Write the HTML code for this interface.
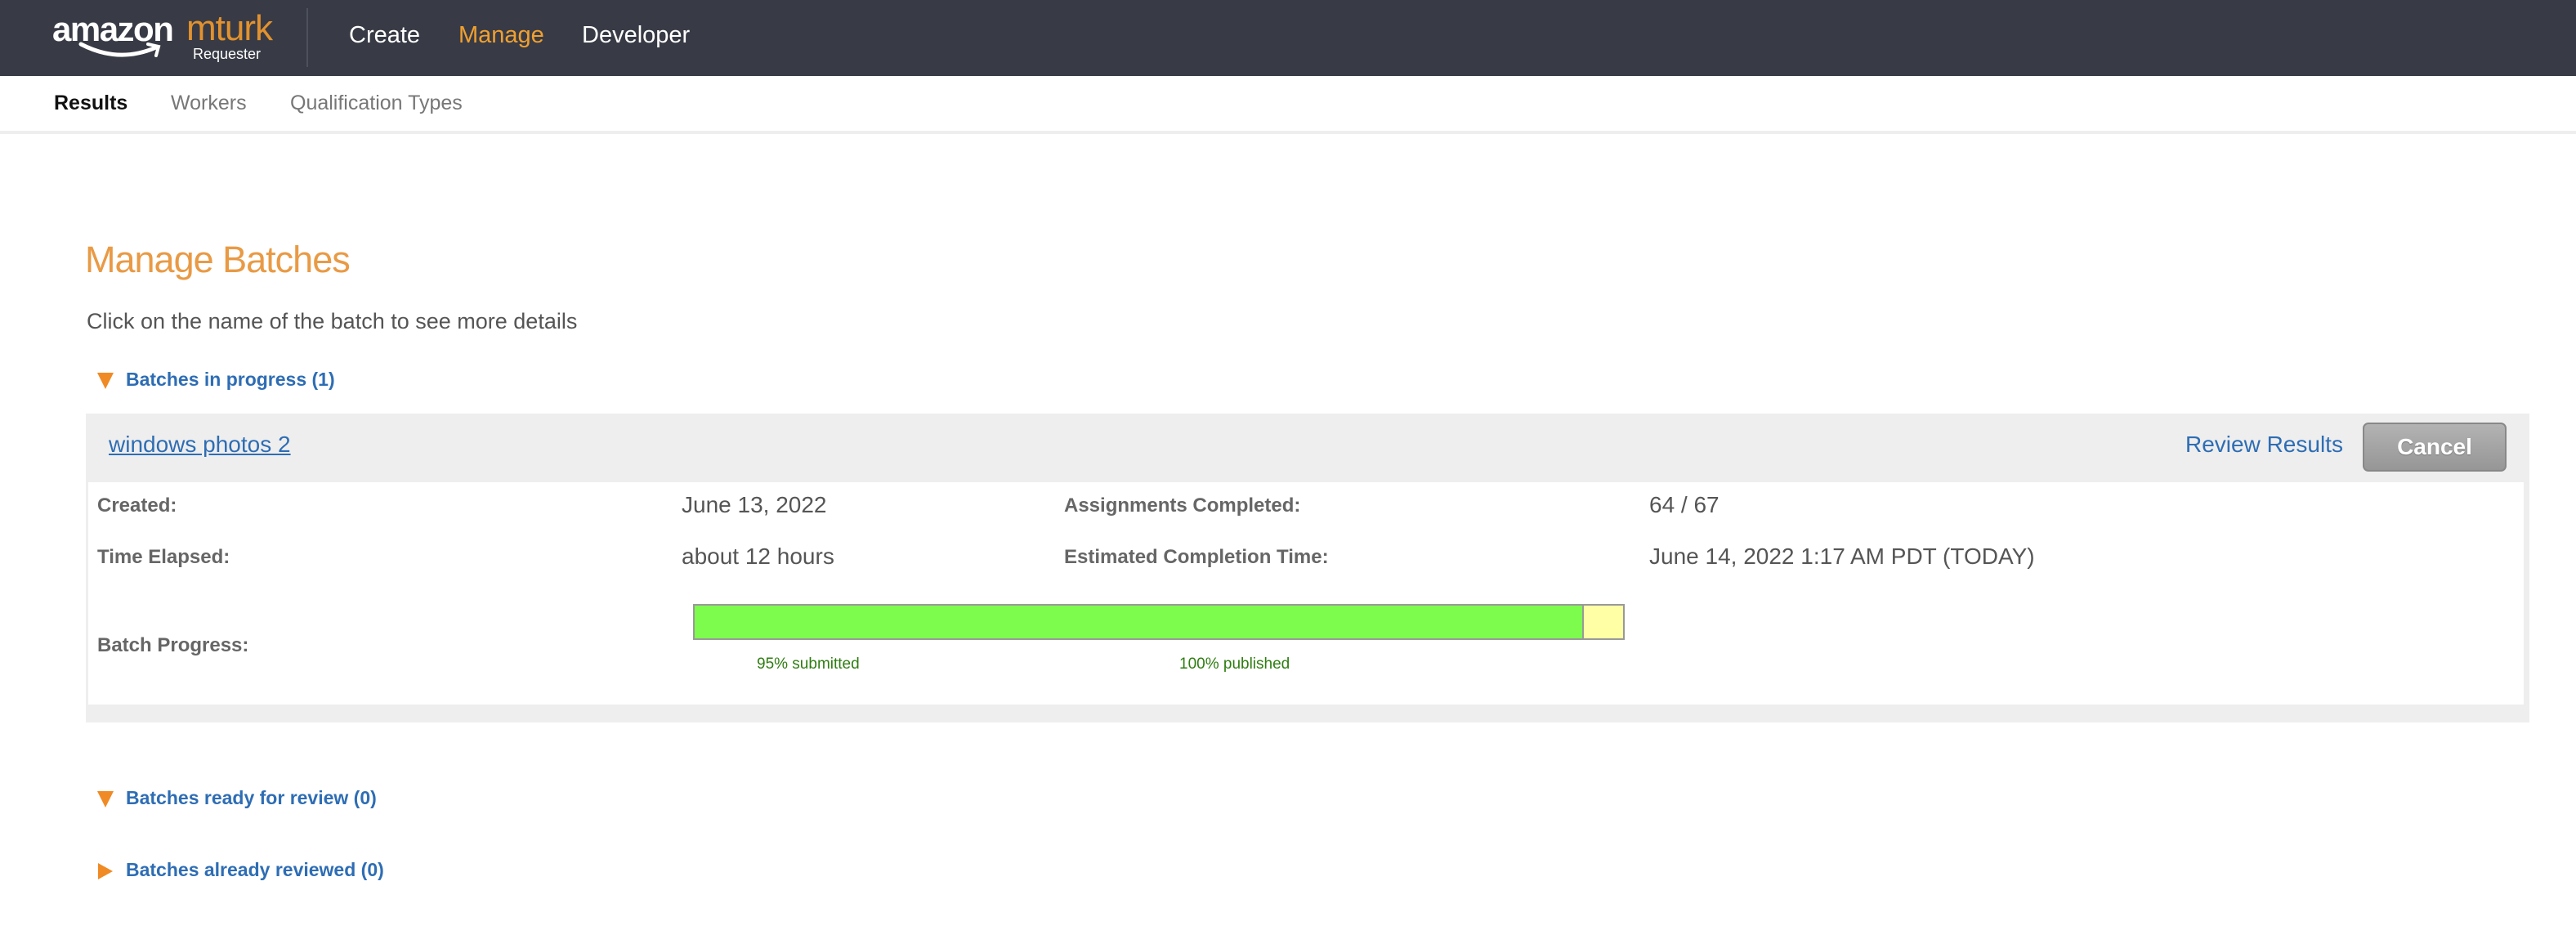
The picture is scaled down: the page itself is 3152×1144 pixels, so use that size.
<!DOCTYPE html>
<html><head><meta charset="utf-8"><style>
*{margin:0;padding:0;box-sizing:border-box}
body{width:3152px;height:1144px;background:#fff;font-family:"Liberation Sans",Arial,sans-serif;position:relative;overflow:hidden}
.a{position:absolute;white-space:nowrap}
#hdr{position:absolute;left:0;top:0;width:3152px;height:93px;background:#383b45}
.nav{font-size:29px;color:#fff;top:27px}
.sub{font-size:25px;top:112px;color:#777}
.lbl{font-size:24px;font-weight:bold;color:#666}
.val{font-size:28px;color:#555}
.sec{font-size:23px;font-weight:bold;color:#2e6db4}
.tri{width:0;height:0;border-left:10px solid transparent;border-right:10px solid transparent;border-top:20px solid #f08a24}
.trir{width:0;height:0;border-top:10px solid transparent;border-bottom:10px solid transparent;border-left:18px solid #f08a24}
</style></head><body>
<div id="hdr"></div>
<div class="a" style="left:64px;top:12px;font-size:42px;font-weight:bold;color:#fff;letter-spacing:-1.5px">amazon</div>
<svg class="a" style="left:95px;top:48px" width="110" height="26" viewBox="0 0 110 26"><path d="M4 6 Q50 30 96 10" stroke="#fff" stroke-width="5" fill="none" stroke-linecap="round"/><path d="M86 6 L99 9 L96 20" stroke="#fff" stroke-width="4" fill="none" stroke-linecap="round"/></svg>
<div class="a" style="left:228px;top:10px;font-size:44px;color:#e2922e;letter-spacing:-1px">mturk</div>
<div class="a" style="left:236px;top:56px;font-size:18px;color:#fff">Requester</div>
<div class="a" style="left:375px;top:10px;width:2px;height:72px;background:#4d515b"></div>
<div class="a nav" style="left:427px">Create</div>
<div class="a nav" style="left:561px;color:#f0a030">Manage</div>
<div class="a nav" style="left:712px">Developer</div>
<div class="a sub" style="left:66px;color:#111;font-weight:bold">Results</div>
<div class="a sub" style="left:209px">Workers</div>
<div class="a sub" style="left:355px">Qualification Types</div>
<div class="a" style="left:0;top:160px;width:3152px;height:4px;background:#eee"></div>

<div class="a" style="left:104px;top:292px;font-size:45px;color:#e99a45;letter-spacing:-1px">Manage Batches</div>
<div class="a" style="left:106px;top:378px;font-size:27px;color:#555">Click on the name of the batch to see more details</div>
<div class="a tri" style="left:119px;top:456px"></div>
<div class="a sec" style="left:154px;top:451px">Batches in progress (1)</div>

<div class="a" style="left:105px;top:506px;width:2990px;height:378px;background:#eee"></div>
<div class="a" style="left:108px;top:590px;width:2980px;height:272px;background:#fff"></div>
<div class="a" style="left:133px;top:528px;font-size:28px;color:#2e6db4;text-decoration:underline">windows photos 2</div>
<div class="a" style="left:2674px;top:528px;font-size:28px;color:#2e6db4">Review Results</div>
<div class="a" style="left:2891px;top:517px;width:176px;height:60px;border-radius:7px;background:linear-gradient(#b3b3b3,#969696);border:2px solid #888;color:#fff;font-size:28px;font-weight:bold;text-align:center;line-height:56px;text-shadow:0 1px 1px #777">Cancel</div>

<div class="a lbl" style="left:119px;top:605px">Created:</div>
<div class="a val" style="left:834px;top:602px">June 13, 2022</div>
<div class="a lbl" style="left:1302px;top:605px">Assignments Completed:</div>
<div class="a val" style="left:2018px;top:602px">64 / 67</div>
<div class="a lbl" style="left:119px;top:668px">Time Elapsed:</div>
<div class="a val" style="left:834px;top:665px">about 12 hours</div>
<div class="a lbl" style="left:1302px;top:668px">Estimated Completion Time:</div>
<div class="a val" style="left:2018px;top:665px">June 14, 2022 1:17 AM PDT (TODAY)</div>
<div class="a lbl" style="left:119px;top:776px">Batch Progress:</div>
<div class="a" style="left:848px;top:739px;width:1140px;height:44px;border:2px solid #999;background:#ffffa6">
<div style="width:1088px;height:40px;background:#7efc4d;border-right:2px solid #999"></div></div>
<div class="a" style="left:926px;top:802px;font-size:19px;color:#2e7d10">95% submitted</div>
<div class="a" style="left:1443px;top:802px;font-size:19px;color:#2e7d10">100% published</div>

<div class="a tri" style="left:119px;top:968px"></div>
<div class="a sec" style="left:154px;top:963px">Batches ready for review (0)</div>
<div class="a trir" style="left:120px;top:1056px"></div>
<div class="a sec" style="left:154px;top:1051px">Batches already reviewed (0)</div>
</body></html>
